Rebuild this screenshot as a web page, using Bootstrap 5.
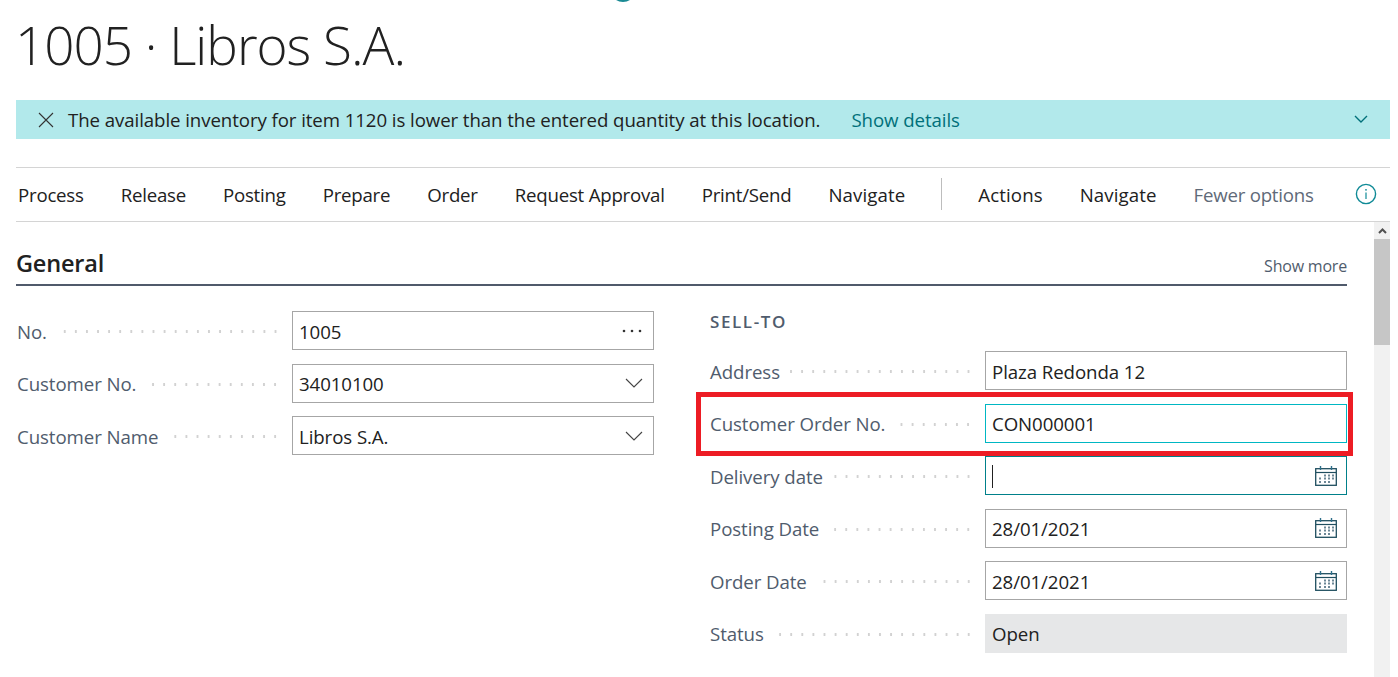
<!DOCTYPE html>
<html lang="en"><head><meta charset="utf-8"><title>1005 · Libros S.A.</title>
<link rel="stylesheet" href="https://cdn.jsdelivr.net/npm/bootstrap@5.3.0/dist/css/bootstrap.min.css">
<style>
html,body{height:677px;overflow:hidden;background:#fff}
body{font-family:"Open Sans","Noto Sans",sans-serif;font-size:18.67px;letter-spacing:-.08px;color:#212121;padding:0 8px 0 16px;position:relative}
.top-arc{position:absolute;left:608px;top:-13px}
.page-title{font-family:"Open Sans",sans-serif;font-weight:300;font-size:53px;line-height:70px;height:100px;margin:0 0 0 -1px;padding-top:10px;letter-spacing:-1px;color:#212121}
.notice{height:39px;background:#b2e9eb;padding:0 22px;gap:14px}
.notice-link{color:#00707a;margin-left:17px}
.action-bar{height:55px;margin-top:28px;border-top:1px solid #d4d4d4;border-bottom:1px solid #d4d4d4;gap:37px;padding:0 0 0 2px;position:relative;letter-spacing:-.23px}
.act-wide{letter-spacing:.1px}
.act-sep{width:1px;height:32px;background:#bdbdbd;margin:-1px -1px 0 -1px}
.act-muted{color:#5f6a78}
.info-ic{position:absolute;left:1339px;top:15px}
.content-wrap{height:455px}
.form-area{width:1331px;padding-top:25px;position:relative}
.sec-head{height:39px;border-bottom:2px solid #505a6b}
.sec-title{font-weight:600;font-size:23.5px;letter-spacing:-.2px;color:#212121;line-height:32px;padding-bottom:5px;height:37px}
.sec-more{font-size:16px;color:#505c6d;letter-spacing:-.2px;padding-bottom:6px}
.cols{gap:56px;padding:25px 0 0 1px}
.fcol{width:637px}
.fcol-r{width:637px}
.group-head{font-weight:600;font-size:17px;letter-spacing:1.6px;color:#505c6d;height:40px;line-height:20px;padding-top:1px}
.frow{height:39px;margin-bottom:13.5px}
.flabel{width:275px;flex:none;color:#505c6d;padding:2px 11px 0 0}
.leader{flex:1;height:3px;margin-left:10px;background:radial-gradient(circle,#d2d2d2 1.1px,transparent 1.4px) right center/11.1px 3px repeat-x}
.fbox{width:362px;height:39px;border:1px solid #a6a6a6;padding:2px 6px 0}
.fbox input{border:0;outline:0;background:transparent;padding:0;flex:1;min-width:0;font:inherit;letter-spacing:inherit;color:#212121}
.fbox.is-hit{border-color:#00b7c3}
.fbox.is-focus{border-color:#00808a}
.fbox.is-ro{background:#e6e7e8;border-color:#e6e7e8}
.caret-bar{width:1px;height:23px;background:#212121;flex:none}
.ic-more{margin:-2px 5px 0 0}
.ic-chev{margin:-2px 4px 0 0}
.ic-cal{margin:-2px 3px 0 0}
.sbar{width:16px;background:#f1f1f1;margin-left:27px;flex:none}
.sbar-btn{height:17px}
.sbar-thumb{height:106px;background:#c6c6c6}
.hilite{position:absolute;left:680px;top:170px;width:657px;height:64px;border:5px solid #ed1c24;pointer-events:none}
</style></head><body>
<svg class="top-arc" width="30" height="16" viewBox="0 0 30 16"><circle cx="15" cy="2" r="12" fill="none" stroke="#1a8a94" stroke-width="2"/></svg>
<h1 class="page-title">1005 · Libros S.A.</h1>
<div class="notice d-flex align-items-center">
  <svg width="16" height="16" viewBox="0 0 16 16" class="flex-shrink-0"><path d="M1 1l14 14M15 1L1 15" stroke="#333" stroke-width="1.1" fill="none"/></svg>
  <span>The available inventory for item 1120 is lower than the entered quantity at this location.</span>
  <span class="notice-link">Show details</span>
  <svg class="ms-auto flex-shrink-0" width="14" height="9" viewBox="0 0 14 9"><path d="M1 1l6 6 6-6" stroke="#00707a" stroke-width="1.4" fill="none"/></svg>
</div>
<div class="action-bar d-flex align-items-center">
  <span>Process</span><span>Release</span><span>Posting</span><span>Prepare</span><span>Order</span><span>Request Approval</span><span>Print/Send</span><span class="act-wide">Navigate</span>
  <span class="act-sep"></span>
  <span class="act-wide">Actions</span><span class="act-wide">Navigate</span><span class="act-muted">Fewer options</span>
  <svg class="info-ic" width="22" height="22" viewBox="0 0 22 22"><circle cx="11" cy="11" r="9.6" fill="none" stroke="#0f8a96" stroke-width="1.4"/><path d="M11 9.5v6.5" stroke="#0f8a96" stroke-width="1.2"/><circle cx="11" cy="6.8" r=".9" fill="#0f8a96"/></svg>
</div>
<div class="content-wrap d-flex">
  <div class="form-area">
    <div class="sec-head d-flex justify-content-between align-items-end">
      <span class="sec-title">General</span><span class="sec-more">Show more</span>
    </div>
    <div class="cols d-flex">
      <div class="fcol">
        <div class="frow d-flex align-items-center"><div class="flabel d-flex align-items-center"><span>No.</span><span class="leader"></span></div>
          <div class="fbox d-flex align-items-center"><input value="1005" aria-label="No."><svg class="ic-more" width="20" height="4" viewBox="0 0 20 4"><circle cx="2" cy="2" r="1.3" fill="#333"/><circle cx="10" cy="2" r="1.3" fill="#333"/><circle cx="18" cy="2" r="1.3" fill="#333"/></svg></div></div>
        <div class="frow d-flex align-items-center"><div class="flabel d-flex align-items-center"><span>Customer No.</span><span class="leader"></span></div>
          <div class="fbox d-flex align-items-center"><input value="34010100" aria-label="Customer No."><svg class="ic-chev" width="18" height="10" viewBox="0 0 18 10"><path d="M1 1l8 8 8-8" stroke="#444" stroke-width="1.1" fill="none"/></svg></div></div>
        <div class="frow d-flex align-items-center"><div class="flabel d-flex align-items-center"><span>Customer Name</span><span class="leader"></span></div>
          <div class="fbox d-flex align-items-center"><input value="Libros S.A." aria-label="Customer Name"><svg class="ic-chev" width="18" height="10" viewBox="0 0 18 10"><path d="M1 1l8 8 8-8" stroke="#444" stroke-width="1.1" fill="none"/></svg></div></div>
      </div>
      <div class="fcol-r">
        <div class="group-head">SELL-TO</div>
        <div class="frow d-flex align-items-center"><div class="flabel d-flex align-items-center"><span>Address</span><span class="leader"></span></div>
          <div class="fbox d-flex align-items-center"><input value="Plaza Redonda 12" aria-label="Address"></div></div>
        <div class="frow d-flex align-items-center"><div class="flabel d-flex align-items-center"><span>Customer Order No.</span><span class="leader"></span></div>
          <div class="fbox is-hit d-flex align-items-center"><input value="CON000001" aria-label="Customer Order No."></div></div>
        <div class="frow d-flex align-items-center"><div class="flabel d-flex align-items-center"><span>Delivery date</span><span class="leader"></span></div>
          <div class="fbox is-focus d-flex align-items-center"><span class="caret-bar"></span><input aria-label="Delivery date"><svg class="ic-cal" width="22" height="20" viewBox="0 0 22 20"><use href="#cal"/></svg></div></div>
        <div class="frow d-flex align-items-center"><div class="flabel d-flex align-items-center"><span>Posting Date</span><span class="leader"></span></div>
          <div class="fbox d-flex align-items-center"><input value="28/01/2021" aria-label="Posting Date"><svg class="ic-cal" width="22" height="20" viewBox="0 0 22 20"><use href="#cal"/></svg></div></div>
        <div class="frow d-flex align-items-center"><div class="flabel d-flex align-items-center"><span>Order Date</span><span class="leader"></span></div>
          <div class="fbox d-flex align-items-center"><input value="28/01/2021" aria-label="Order Date"><svg class="ic-cal" width="22" height="20" viewBox="0 0 22 20"><use href="#cal"/></svg></div></div>
        <div class="frow d-flex align-items-center"><div class="flabel d-flex align-items-center"><span>Status</span><span class="leader"></span></div>
          <div class="fbox is-ro d-flex align-items-center"><input value="Open" readonly aria-label="Status"></div></div>
      </div>
    </div>
    <div class="hilite"></div>
  </div>
  <div class="sbar">
    <div class="sbar-btn d-flex align-items-center justify-content-center"><svg width="9" height="6" viewBox="0 0 9 6"><path d="M1 5l3.5-3.5L8 5" stroke="#505050" stroke-width="2" fill="none"/></svg></div>
    <div class="sbar-thumb"></div>
  </div>
</div>
<svg width="0" height="0" class="position-absolute"><defs><g id="cal"><rect x=".7" y="2.7" width="20.6" height="16.6" fill="#fff" stroke="#1f4e5f" stroke-width="1.3"/><path d="M1 6.5h20" stroke="#1f4e5f" stroke-width="1.2"/><path d="M5.5 0v4M16.5 0v4" stroke="#2e6f8a" stroke-width="1.4"/><path d="M9 8.5h2v2H9zM13 8.5h2v2h-2zM17 8.5h2v2h-2zM4 11.5h2v2H4zM9 11.5h2v2H9zM13 11.5h2v2h-2zM17 11.5h2v2h-2zM4 15h2v2H4zM9 15h2v2H9zM13 15h2v2h-2z" fill="#6d8796"/></g></defs></svg>
</body></html>
